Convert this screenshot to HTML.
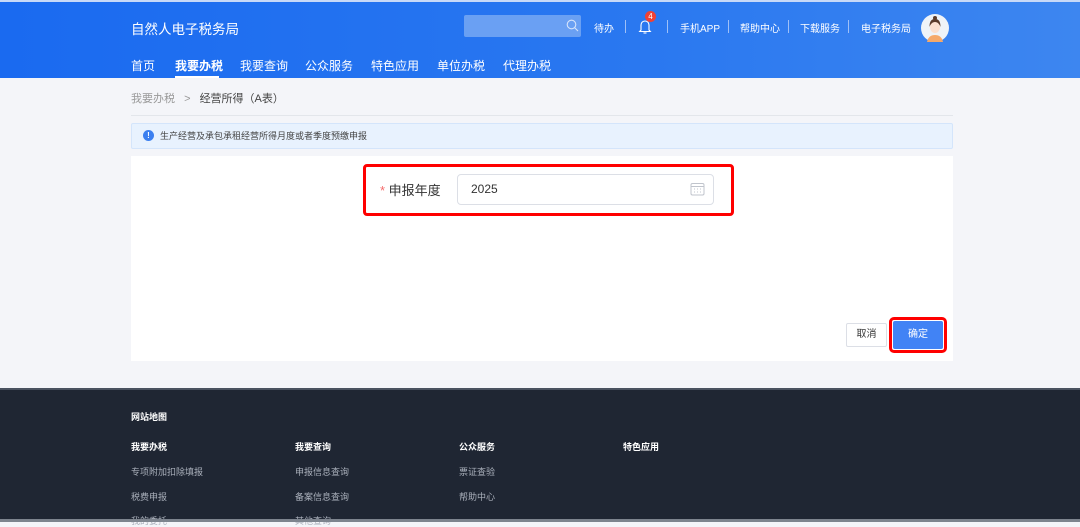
<!DOCTYPE html>
<html><head><meta charset="utf-8">
<style>
*{margin:0;padding:0;box-sizing:border-box}
body{width:1080px;height:522px;overflow:hidden;background:#f4f5f9;font-family:"Liberation Sans","Noto Sans CJK SC",sans-serif;position:relative}
.hdr{position:absolute;left:0;top:0;width:1080px;height:78px;background:linear-gradient(90deg,#1a6af0,#2a78f0 60%,#3d86f0);border-top:2px solid #c7d9f8}
.a{position:absolute;white-space:nowrap}
.t{color:#fff}
.nav{top:55px;font-size:12px;color:#fff}
.top{top:18px;font-size:10px;color:#fff}
.sep{position:absolute;top:18px;width:1px;height:13px;background:#9fc0f7}
.foot{position:absolute;left:0;top:388px;width:1080px;height:134px;background:#1f2633;border-top:2px solid #4a5260}
.fh{font-size:9px;color:#fff;font-weight:bold}
.fl{font-size:9px;color:#aab0bb}
</style></head><body>
<div class="hdr">
<div class="a t" style="left:131px;top:16px;font-size:13.5px">自然人电子税务局</div>
<div class="a" style="left:464px;top:13px;width:117px;height:22px;background:#6aa0f3;border-radius:2px"></div>
<svg class="a" style="left:566px;top:17px" width="13" height="13" viewBox="0 0 13 13"><circle cx="5.5" cy="5.5" r="4.3" fill="none" stroke="#d6e4fb" stroke-width="1.1"/><path d="M8.6 8.6L12 12" stroke="#d6e4fb" stroke-width="1.1"/></svg>
<div class="a top" style="left:594px">待办</div>
<div class="sep" style="left:625px"></div>
<svg class="a" style="left:638px;top:15px" width="14" height="18" viewBox="0 0 14 18"><path d="M3 13V8a4 4 0 0 1 8 0v5l1.3 1.5H1.7z" fill="none" stroke="#fff" stroke-width="1.1"/><path d="M5.5 16h3" stroke="#fff" stroke-width="1.1"/></svg>
<div class="a" style="left:645px;top:9px;width:11px;height:11px;border-radius:50%;background:#f04134;color:#fff;font-size:8px;text-align:center;line-height:11px">4</div>
<div class="sep" style="left:667px"></div>
<div class="a top" style="left:680px">手机APP</div>
<div class="sep" style="left:728px"></div>
<div class="a top" style="left:740px">帮助中心</div>
<div class="sep" style="left:788px"></div>
<div class="a top" style="left:800px">下载服务</div>
<div class="sep" style="left:848px"></div>
<div class="a top" style="left:861px">电子税务局</div>
<svg class="a" style="left:921px;top:12px" width="28" height="28" viewBox="0 0 28 28"><circle cx="14" cy="14" r="14" fill="#eef3f8"/><path d="M6 28c1-5 4-7 8-7s7 2 8 7z" fill="#f5a96a"/><ellipse cx="14" cy="13" rx="5" ry="6" fill="#fbe0cf"/><path d="M8.5 13c0-6 2-8 5.5-8s5.5 2 5.5 8c-1-3-3-5-5.5-5s-4.5 2-5.5 5z" fill="#5a3a2a"/><circle cx="14" cy="4" r="2" fill="#5a3a2a"/></svg>
<div class="a nav" style="left:131px">首页</div>
<div class="a nav" style="left:175px;font-weight:bold">我要办税</div>
<div class="a" style="left:175px;top:74px;width:44px;height:2px;background:#fff"></div>
<div class="a nav" style="left:240px">我要查询</div>
<div class="a nav" style="left:305px">公众服务</div>
<div class="a nav" style="left:371px">特色应用</div>
<div class="a nav" style="left:437px">单位办税</div>
<div class="a nav" style="left:503px">代理办税</div>
</div>
<div class="a" style="left:131px;top:90px;font-size:11px;color:#999">我要办税 <span style="margin:0 6px">&gt;</span> <span style="color:#444">经营所得（A表）</span></div>
<div class="a" style="left:131px;top:115px;width:822px;height:1px;background:#e3e6eb"></div>
<div class="a" style="left:131px;top:123px;width:822px;height:26px;background:#e8f2fe;border:1px solid #d4e5fb;border-radius:2px"></div>
<div class="a" style="left:143px;top:130px;width:11px;height:11px;border-radius:50%;background:#3b7ff0;color:#fff;font-size:8px;font-weight:bold;text-align:center;line-height:11px">!</div>
<div class="a" style="left:160px;top:129px;font-size:9px;color:#444">生产经营及承包承租经营所得月度或者季度预缴申报</div>
<div class="a" style="left:131px;top:156px;width:822px;height:205px;background:#fff"></div>
<div class="a" style="left:363px;top:164px;width:371px;height:52px;border:3px solid #f00;border-radius:4px"></div>
<div class="a" style="left:380px;top:180px;font-size:13px;color:#333"><span style="color:#f56c6c">* </span>申报年度</div>
<div class="a" style="left:457px;top:174px;width:257px;height:31px;border:1px solid #dcdfe6;border-radius:4px"></div>
<div class="a" style="left:471px;top:182px;font-size:12px;color:#333">2025</div>
<svg class="a" style="left:690px;top:182px" width="15" height="14" viewBox="0 0 15 14"><rect x="1" y="1.5" width="13" height="11.5" rx="1.5" fill="none" stroke="#c0c4cc"/><path d="M1 4.5h13" stroke="#c0c4cc"/><path d="M4 7h1M7 7h1M10 7h1M4 10h1M7 10h1M10 10h1" stroke="#c0c4cc"/></svg>
<div class="a" style="left:846px;top:323px;width:41px;height:24px;border:1px solid #dcdfe6;border-radius:2px;font-size:10px;color:#333;text-align:center;line-height:22px;background:#fff">取消</div>
<div class="a" style="left:889px;top:317px;width:58px;height:36px;border:3px solid #f00;border-radius:5px"></div>
<div class="a" style="left:893px;top:321px;width:50px;height:28px;background:#4183f5;border-radius:2px;font-size:10px;color:#fff;text-align:center;line-height:28px">确定</div>
<div class="foot">
<div class="a fh" style="left:131px;top:20px">网站地图</div>
<div class="a fh" style="left:131px;top:50px">我要办税</div>
<div class="a fh" style="left:295px;top:50px">我要查询</div>
<div class="a fh" style="left:459px;top:50px">公众服务</div>
<div class="a fh" style="left:623px;top:50px">特色应用</div>
<div class="a fl" style="left:131px;top:75px">专项附加扣除填报</div>
<div class="a fl" style="left:295px;top:75px">申报信息查询</div>
<div class="a fl" style="left:459px;top:75px">票证查验</div>
<div class="a fl" style="left:131px;top:100px">税费申报</div>
<div class="a fl" style="left:295px;top:100px">备案信息查询</div>
<div class="a fl" style="left:459px;top:100px">帮助中心</div>
<div class="a fl" style="left:131px;top:124px">我的委托</div>
<div class="a fl" style="left:295px;top:124px">其他查询</div>
</div>
<div class="a" style="left:0;top:519px;width:1080px;height:3px;background:#7d848e"></div>
</body></html>
